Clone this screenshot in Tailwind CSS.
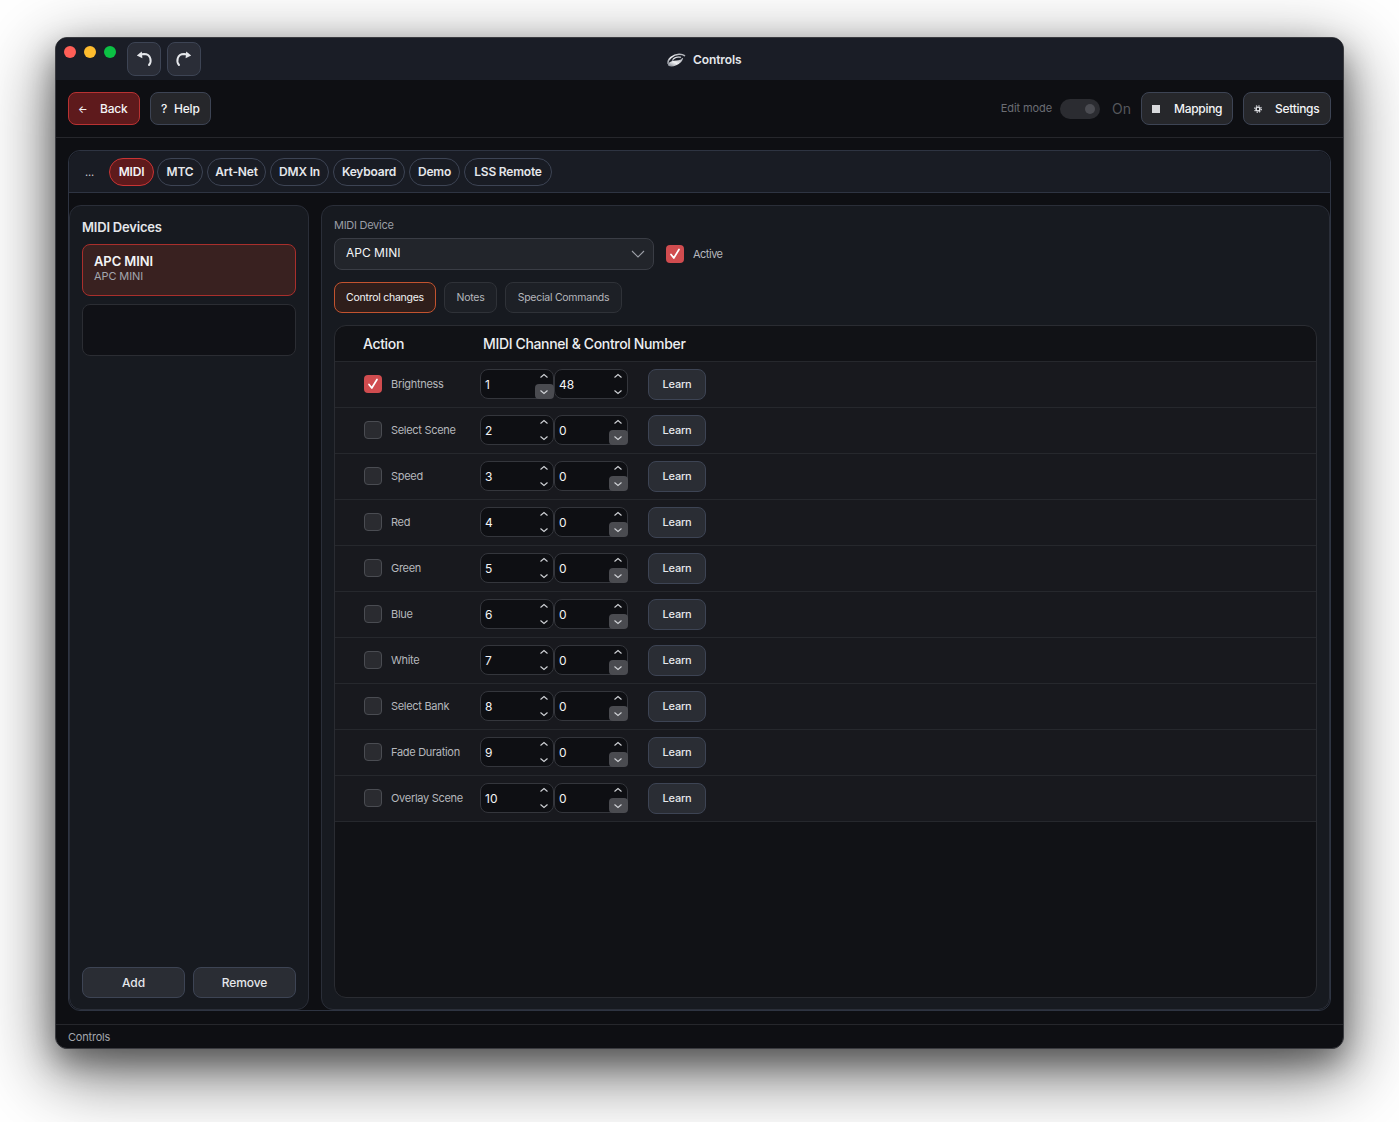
<!DOCTYPE html>
<html lang="en">
<head>
    <meta charset="UTF-8">
    <title>Controls</title>
    <script src="https://cdn.jsdelivr.net/npm/@tailwindcss/browser@4"></script>
</head>
<body class="bg-white font-['Inter',sans-serif] w-[1399px] h-[1122px] overflow-hidden pl-[55px] pt-[37px]">

<div class="w-[1289px] h-[1012px] rounded-[12px] border border-[#3a3b40] bg-[#0e0f13] shadow-[0_22px_70px_4px_rgba(0,0,0,0.56),0_14px_30px_rgba(0,0,0,0.35)] overflow-hidden flex flex-col">

    <!-- title bar -->
    <div class="h-[42px] shrink-0 bg-[#1a1d26] relative flex items-start pl-[8px] pt-[8px]">
        <div class="flex gap-[8px]">
            <span class="w-3 h-3 rounded-full bg-[#ff5f57]"></span>
            <span class="w-3 h-3 rounded-full bg-[#febc2e]"></span>
            <span class="w-3 h-3 rounded-full bg-[#0cc144]"></span>
        </div>
        <div class="flex gap-[6px] ml-[11px] -mt-[4px]">
            <button class="w-[34px] h-[34px] rounded-[8px] border border-[#3d4454] bg-[#2a2d37] flex items-center justify-center">
                <svg width="18" height="18" viewBox="0 0 18 18" fill="none" stroke="#e5e7eb" stroke-width="2" stroke-linecap="round"><path d="M14 15 C17 11.5 16 4 9 4 L5.5 4.6"/><path d="M1.8 5.6 L6.8 1.4 L7.4 8.2 Z" fill="#e5e7eb" stroke="none"/></svg>
            </button>
            <button class="w-[34px] h-[34px] rounded-[8px] border border-[#3d4454] bg-[#2a2d37] flex items-center justify-center">
                <svg width="18" height="18" viewBox="0 0 18 18" fill="none" stroke="#e5e7eb" stroke-width="2" stroke-linecap="round"><path d="M4 15 C1 11.5 2 4 9 4 L12.5 4.6"/><path d="M16.2 5.6 L11.2 1.4 L10.6 8.2 Z" fill="#e5e7eb" stroke="none"/></svg>
            </button>
        </div>
        <div class="absolute left-[610px] top-[13px] flex items-center gap-[7px]">
            <svg width="20" height="16" viewBox="0 0 20 16" fill="none">
                <defs><linearGradient id="logo" x1="0" y1="1" x2="1" y2="0"><stop offset="0" stop-color="#8b8f98"/><stop offset="0.45" stop-color="#f1f2f4"/><stop offset="1" stop-color="#a6a9b0"/></linearGradient></defs>
                <path d="M2 11.5 C1.5 7 7 2.5 13 2.2 C15.5 2.1 17.5 2.8 18.5 3.6" stroke="url(#logo)" stroke-width="1.6" stroke-linecap="round"/>
                <path d="M2.5 13 C6 15.5 14.5 12 16.5 6.5 C15 10 10 8.5 6.5 9.5 C4 10.2 2.8 11.5 2.5 13 Z" fill="url(#logo)" stroke="url(#logo)" stroke-width="1.2" stroke-linejoin="round"/>
                <path d="M6.5 8.5 C7.5 6 11 4.6 14.5 5.2" stroke="url(#logo)" stroke-width="1.4" stroke-linecap="round"/>
            </svg>
            <span class="text-[12px] font-semibold text-[#e5e7eb] tracking-[-0.1px]">Controls</span>
        </div>
    </div>

    <!-- toolbar -->
    <div class="h-[58px] shrink-0 border-b border-[#26272c] flex items-center justify-between px-[12px]">
        <div class="flex items-center gap-[10px]">
            <button class="h-[33px] w-[72px] rounded-[8px] border border-[#b93232] bg-[#5e1a1c] text-[#f3f4f6] text-[12px] tracking-[-0.2px] font-medium flex items-center pl-[9px] pt-[1px]">
                <span class="text-[10px] w-[22px] text-left">←</span><span>Back</span>
            </button>
            <button class="h-[33px] w-[61px] rounded-[8px] border border-[#3d4454] bg-[#26272b] text-[#f3f4f6] text-[12px] tracking-[-0.2px] font-medium flex items-center pl-[10px] pt-[1px]">
                <span class="w-[13px] text-left">?</span><span>Help</span>
            </button>
        </div>
        <div class="flex items-center">
            <span class="text-[11px] text-[#6b6d73] mr-[8px] tracking-[-0.1px]">Edit mode</span>
            <span class="w-[40px] h-[20px] rounded-full bg-[#2b2c31] relative mr-[12px]">
                <span class="absolute right-[5px] top-[5px] w-[10px] h-[10px] rounded-full bg-[#4b4c52]"></span>
            </span>
            <span class="text-[14px] text-[#55575c] mr-[10px]">On</span>
            <button class="h-[33px] w-[92px] rounded-[8px] border border-[#3d4454] bg-[#26272b] text-[#f3f4f6] text-[12px] tracking-[-0.3px] font-medium flex items-center pl-[10px] pt-[1px] mr-[10px]">
                <span class="w-[8px] h-[8px] bg-[#d8d9dc] mr-[14px]"></span><span>Mapping</span>
            </button>
            <button class="h-[33px] w-[88px] rounded-[8px] border border-[#3d4454] bg-[#26272b] text-[#f3f4f6] text-[12px] tracking-[-0.3px] font-medium flex items-center pl-[10px] pt-[1px]">
                <svg class="mr-[13px]" width="8" height="8" viewBox="0 0 8 8" fill="none" stroke="#e5e7eb"><circle cx="4" cy="4" r="1.9" stroke-width="1.4"/><circle cx="4" cy="4" r="3.3" stroke-width="1.2" stroke-dasharray="1.3 1.3"/></svg><span>Settings</span>
            </button>
        </div>
    </div>

    <!-- main -->
    <div class="flex-1 min-h-0 px-[12px] pt-[12px] pb-[13px]">
        <div class="h-full rounded-[12px] border border-[#2e3442] flex flex-col">
            <div class="h-[42px] shrink-0 bg-[#191c24] rounded-t-[12px] border-b border-[#2e3442] flex items-center pl-[16px] gap-[4px] text-[12px] font-semibold tracking-[-0.2px]">
                <span class="text-[11px] font-normal text-[#c9cbd0] w-[20px] pt-[2px]">...</span>
                <span class="h-[28px] w-[45px] rounded-full border border-[#c93434] bg-[#5e1a1c] text-[#f3f4f6] flex items-center justify-center">MIDI</span>
                <span class="h-[28px] w-[46px] -ml-[1px] rounded-full border border-[#3d4454] text-[#e5e7eb] flex items-center justify-center">MTC</span>
                <span class="h-[28px] w-[59px] rounded-full border border-[#3d4454] text-[#e5e7eb] flex items-center justify-center">Art-Net</span>
                <span class="h-[28px] w-[59px] rounded-full border border-[#3d4454] text-[#e5e7eb] flex items-center justify-center">DMX In</span>
                <span class="h-[28px] w-[72px] rounded-full border border-[#3d4454] text-[#e5e7eb] flex items-center justify-center">Keyboard</span>
                <span class="h-[28px] w-[51px] rounded-full border border-[#3d4454] text-[#e5e7eb] flex items-center justify-center">Demo</span>
                <span class="h-[28px] w-[88px] rounded-full border border-[#3d4454] text-[#e5e7eb] flex items-center justify-center">LSS Remote</span>
            </div>

            <div class="flex-1 min-h-0 flex gap-[12px] pt-[12px]">
                <!-- devices -->
                <div class="w-[240px] shrink-0 rounded-[12px] border border-[#2a2e38] bg-[#171a20] px-[12px] flex flex-col">
                    <h2 class="text-[13px] font-semibold text-[#e5e7eb] mt-[13px] h-[16px] leading-[16px] tracking-[-0.2px]">MIDI Devices</h2>
                    <div class="mt-[9px] h-[52px] rounded-[8px] border border-[#a92f2c] bg-[#392120] pl-[11px] pt-[8px]">
                        <div class="text-[13px] font-semibold text-[#f3f4f6] leading-[16px] tracking-[-0.1px]">APC MINI</div>
                        <div class="text-[11px] text-[#a3a6ad] leading-[14px] tracking-[-0.1px]">APC MINI</div>
                    </div>
                    <div class="mt-[8px] h-[52px] rounded-[8px] border border-[#2b2d33] bg-[#101116]"></div>
                    <div class="mt-auto mb-[11px] flex gap-[8px]">
                        <button class="flex-1 h-[31px] rounded-[8px] border border-[#3d4454] bg-[#2a2d34] text-[12px] tracking-[-0.1px] font-medium text-[#e5e7eb] pt-[1px]">Add</button>
                        <button class="flex-1 h-[31px] rounded-[8px] border border-[#3d4454] bg-[#2a2d34] text-[12px] tracking-[-0.1px] font-medium text-[#e5e7eb] pt-[1px]">Remove</button>
                    </div>
                </div>

                <!-- device detail -->
                <div class="flex-1 min-w-0 rounded-[12px] border border-[#2a2e38] bg-[#171a20] px-[12px] flex flex-col">
                    <label class="text-[11px] text-[#9a9da5] mt-[12px] h-[14px] leading-[14px] tracking-[-0.27px]">MIDI Device</label>
                    <div class="mt-[6px] flex items-center">
                        <div class="w-[320px] h-[32px] rounded-[8px] border border-[#3a3d45] bg-[#22252b] pl-[11px] pr-[8px] flex items-center justify-between">
                            <span class="text-[12px] font-normal text-[#f3f4f6] -mt-[2px]">APC MINI</span>
                            <svg width="14" height="8" viewBox="0 0 14 8" fill="none" stroke="#9a9da5" stroke-width="1.1"><path d="M1 1 L7 7 L13 1"/></svg>
                        </div>
                        <span class="ml-[12px] w-[18px] h-[18px] rounded-[4px] bg-[#d04c4f] flex items-center justify-center">
                            <svg width="12" height="12" viewBox="0 0 12 12" fill="none" stroke="#fff" stroke-width="1.7" stroke-linecap="round" stroke-linejoin="round"><path d="M2 6.5 L4.8 10 L10 1.5"/></svg>
                        </span>
                        <span class="ml-[9px] text-[11px] tracking-[-0.5px] text-[#b5b7bc]">Active</span>
                    </div>
                    <div class="mt-[12px] flex gap-[8px] text-[10.5px] tracking-[-0.25px]">
                        <span class="h-[31px] w-[102px] rounded-[8px] border border-[#c2532f] bg-[#2f1e1b] text-[#f3f4f6] flex items-center justify-center pt-[1px]">Control changes</span>
                        <span class="h-[31px] w-[53px] rounded-[8px] border border-[#2f3238] bg-[#1d2026] text-[#b5b7bc] flex items-center justify-center pt-[1px]">Notes</span>
                        <span class="h-[31px] w-[117px] rounded-[8px] border border-[#2f3238] bg-[#1d2026] text-[#b5b7bc] flex items-center justify-center pt-[1px]">Special Commands</span>
                    </div>

                    <!-- mapping table -->
                    <div class="mt-[12px] mb-[11px] flex-1 min-h-0 rounded-[12px] border border-[#2a2c32] bg-[#111216] overflow-hidden">
                        <div class="h-[35px] flex items-center text-[14px] font-medium text-[#eceef1] tracking-[-0.35px]">
                            <span class="ml-[28px] w-[120px]">Action</span>
                            <span>MIDI Channel &amp; Control Number</span>
                        </div>
                        <div id="rows"></div>
                    </div>
                </div>
            </div>
        </div>
    </div>

    <!-- status bar -->
    <div class="h-[24px] shrink-0 border-t border-[#26272c] pl-[12px] pt-[1px] text-[11px] tracking-[-0.2px] text-[#a3a6ad] flex items-center">Controls</div>
</div>

<script>
    const actions = [
        ['Brightness', 1, 48], ['Select Scene', 2, 0], ['Speed', 3, 0], ['Red', 4, 0], ['Green', 5, 0],
        ['Blue', 6, 0], ['White', 7, 0], ['Select Bank', 8, 0], ['Fade Duration', 9, 0], ['Overlay Scene', 10, 0]
    ];

    function spinbox(value, hovered) {
        const down = hovered ? '<span class="absolute right-[-1px] bottom-[-1px] w-[19px] h-[15px] rounded-[4px] bg-[#4a4b50]"></span>' : '';
        return `<div class="relative w-[74px] h-[30px] -mt-[1px] rounded-[8px] border border-[#34363c] bg-[#0e0f13] text-[12px] text-[#f3f4f6] flex items-center pl-[4px] pt-[2px]">
            <span>${value}</span>${down}
            <svg class="absolute right-[4px] top-[3px]" width="10" height="22" viewBox="0 0 10 22" fill="none" stroke="#d1d3d7" stroke-width="1.1"><path d="M1.5 4.5 L5 1.5 L8.5 4.5"/><path d="M1.5 17.5 L5 20.5 L8.5 17.5"/></svg>
        </div>`;
    }

    document.getElementById('rows').innerHTML = actions.map(([name, ch, num], i) => {
        const box = i === 0
            ? `<span class="w-[18px] h-[18px] -mt-[1px] rounded-[4px] bg-[#d04c4f] flex items-center justify-center"><svg width="12" height="12" viewBox="0 0 12 12" fill="none" stroke="#fff" stroke-width="1.7" stroke-linecap="round" stroke-linejoin="round"><path d="M2 6.5 L4.8 10 L10 1.5"/></svg></span>`
            : `<span class="w-[18px] h-[18px] -mt-[1px] rounded-[4px] border border-[#4a4c52] bg-[#2a2b30]"></span>`;
        return `<div class="h-[46px] border-t border-[#26282d] bg-[#18191e] flex items-center pl-[29px] last:h-[47px] last:border-b">
            ${box}
            <span class="ml-[9px] w-[89px] text-[11px] tracking-[-0.3px] text-[#b5b7bc]">${name}</span>
            ${spinbox(ch, i === 0)}
            ${spinbox(num, i !== 0)}
            <button class="ml-[20px] w-[58px] h-[31px] rounded-[8px] border border-[#3d4454] bg-[#2a2d34] text-[11px] tracking-[-0.25px] font-medium text-[#e5e7eb]">Learn</button>
        </div>`;
    }).join('');
</script>
</body>
</html>
